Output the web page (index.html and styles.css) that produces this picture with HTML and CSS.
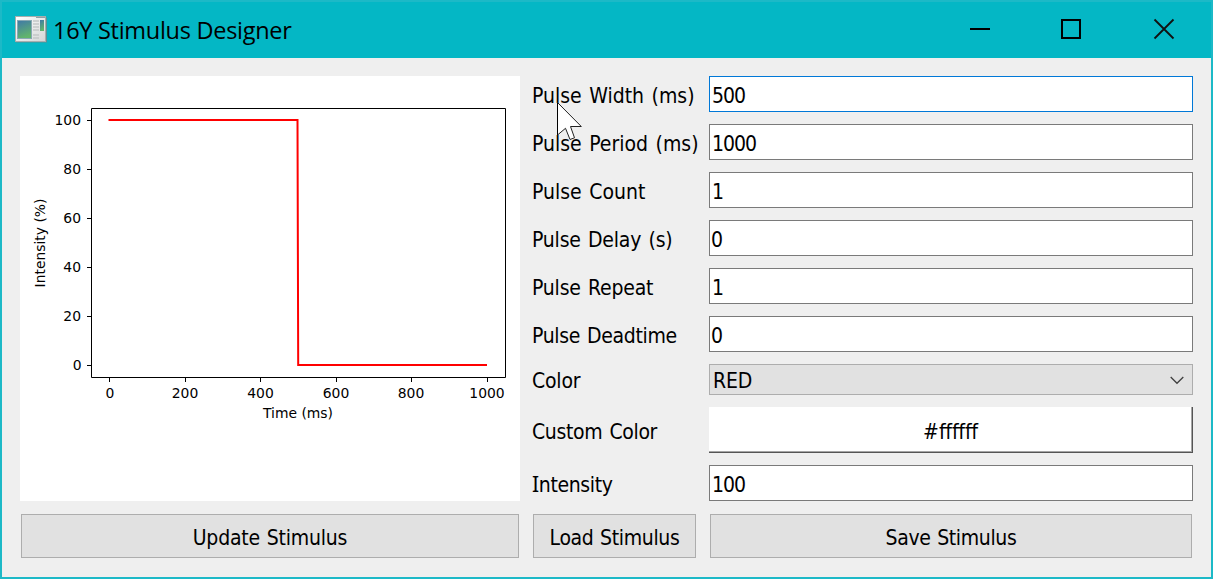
FILE: index.html
```html
<!DOCTYPE html>
<html lang="en">
<head>
<meta charset="utf-8">
<title>16Y Stimulus Designer</title>
<link rel="stylesheet" href="styles.css">
</head>
<body>
<div class="window">
  <header class="titlebar">
    <svg class="app-icon" width="32" height="27" viewBox="0 0 32 27">
      <defs>
        <linearGradient id="pane" x1="0" y1="0" x2="0.3" y2="1"><stop offset="0" stop-color="#3f78a8"/><stop offset="1" stop-color="#62b56c"/></linearGradient>
        <linearGradient id="frame" x1="0" y1="0" x2="1" y2="1"><stop offset="0" stop-color="#ffffff"/><stop offset="1" stop-color="#d4d6d6"/></linearGradient>
      </defs>
      <rect x="1" y="1.500" width="31" height="25" fill="#5d8f94"/>
      <rect x="0.500" y="0.500" width="30" height="25" fill="url(#frame)" stroke="#a9adad"/>
      <path d="M21 1.500h9" stroke="#8fa0a6"/>
      <rect x="2.500" y="4.500" width="14" height="18" fill="url(#pane)" stroke="#8aa9b4"/>
      <path d="M18 5h6M18 8h6M18 11h6M18 14h6M18 19h6M18 22h6" stroke="#c3c7c8" stroke-width="1.500"/>
      <rect x="25" y="4" width="4" height="11" fill="url(#pane)"/>
    </svg>
    <h1 class="title">16Y Stimulus Designer</h1>
    <svg class="controls" width="210" height="30" viewBox="0 0 210 30">
      <path d="M0 15h20" stroke="#000" stroke-width="2"/>
      <rect x="92" y="6" width="18" height="18" fill="none" stroke="#000" stroke-width="2"/>
      <path d="M184.500 5.500l19 19M203.500 5.500l-19 19" stroke="#111" stroke-width="1.800"/>
    </svg>
  </header>
  <main class="content">
    <section class="plot">
      <svg class="chart" width="500" height="425" viewBox="20 76 500 425">
        <path class="axis" d="M91.500 108.500H505.500V377.500H91.500Z"/>
        <path class="axis" d="M87 120.500h4M87 169.500h4M87 218.500h4M87 267.500h4M87 316.500h4M87 365.500h4"/>
        <path class="axis" d="M109.500 378v4M185.500 378v4M260.500 378v4M336.500 378v4M411.500 378v4M487.500 378v4"/>
        <path class="signal" d="M108.500 120H297.500L298.200 365H487"/>
        <g class="ticks-y">
          <text x="81" y="125.400">100</text><text x="81" y="174.400">80</text><text x="81" y="223.400">60</text>
          <text x="81" y="272">40</text><text x="81" y="321">20</text><text x="81.500" y="370">0</text>
        </g>
        <g class="ticks-x">
          <text x="110" y="398">0</text><text x="185" y="398">200</text><text x="260.500" y="398">400</text>
          <text x="336" y="398">600</text><text x="411" y="398">800</text><text x="487" y="398">1000</text>
          <text x="298" y="418">Time (ms)</text>
          <text transform="translate(45 243) rotate(-90)">Intensity (%)</text>
        </g>
      </svg>
    </section>
    <label class="label"><span>Pulse Width (ms)</span></label>
    <div class="field focused">500</div>
    <label class="label"><span>Pulse Period (ms)</span></label>
    <div class="field">1000</div>
    <label class="label"><span>Pulse Count</span></label>
    <div class="field">1</div>
    <label class="label"><span class="tight">Pulse Delay (s)</span></label>
    <div class="field zero">0</div>
    <label class="label"><span class="tight">Pulse Repeat</span></label>
    <div class="field">1</div>
    <label class="label"><span class="tighter">Pulse Deadtime</span></label>
    <div class="field zero">0</div>
    <label class="label label-color"><span class="tight">Color</span></label>
    <div class="combo"><span class="tight">RED</span>
      <svg width="14" height="9" viewBox="0 0 14 9"><path d="M0.700 1l6.300 6.300L13.300 1" fill="none" stroke="#404040" stroke-width="1.300"/></svg>
    </div>
    <label class="label"><span class="tighter">Custom Color</span></label>
    <div class="swatch"><span class="hex">#ffffff</span></div>
    <label class="label"><span class="tighter"><span class="serif-i">I</span>ntensity</span></label>
    <div class="field">100</div>
    <button class="button"><span class="tight">Update Stimulus</span></button>
    <button class="button"><span class="tighter">Load Stimulus</span></button>
    <button class="button"><span class="tighter">Save Stimulus</span></button>
  </main>
  <svg class="cursor" width="28" height="42" viewBox="0 0 28 42">
    <path d="M1.500 1.500V34L9.500 27.300L14 38.500L18.500 36.800L14.500 25.500H25.300Z" fill="#fff"/>
    <path d="M1.500 1.500V34" stroke="#000"/>
    <path d="M1.500 34L9.500 27.300L14 38.500L18.500 36.800L14.500 25.500H25.300L1.500 1.500" fill="none" stroke="#222"/>
  </svg>
</div>
</body>
</html>
```

FILE: styles.css
```css
* { box-sizing: border-box; }
body { margin: 0; }
.window {
  position: relative;
  width: 1213px;
  height: 579px;
  border: 2px solid #1cb9c7;
  background: #efefef;
  color: #000;
  font: 21px/26px "DejaVu Sans Condensed", "DejaVu Sans", sans-serif;
  font-stretch: condensed;
  overflow: hidden;
}
.titlebar {
  display: flex;
  align-items: center;
  height: 56px;
  padding: 0 31px 2px 13px;
  background: #04b7c5;
}
.title {
  margin: 1px auto 0 6px;
  font: 400 23.5px/32px "Open Sans", "Noto Sans", sans-serif;
  letter-spacing: -0.28px;
  white-space: nowrap;
}
.content {
  display: grid;
  grid-template-columns: 500px 165px 484px;
  grid-template-rows: repeat(6, 36px) 31px 46px 36px 46px;
  gap: 12px;
  padding: 18px;
}
.plot { grid-row: 1 / span 9; background: #fff; }
.chart { display: block; font: 13.9px "DejaVu Sans", sans-serif; font-stretch: normal; }
.axis { fill: none; stroke: #000; }
.signal { fill: none; stroke: #f00; stroke-width: 2; }
.ticks-y { text-anchor: end; }
.ticks-x { text-anchor: middle; }
.label {
  display: flex;
  align-items: center;
  padding-top: 4px;
  white-space: nowrap;
  word-spacing: 1.5px;
}
.label-color { padding-top: 2px; }
.tight { letter-spacing: -0.2px; }
.tighter { letter-spacing: -0.35px; }
.serif-i { font-family: "Noto Sans", sans-serif; font-stretch: normal; line-height: 1; }
.field {
  padding: 6px 2px 0;
  border: 1px solid #7a7a7a;
  background: #fff;
  letter-spacing: -1px;
}
.zero { padding-left: 1px; }
.focused { border-color: #0078d7; }
.combo {
  display: flex;
  align-items: center;
  justify-content: space-between;
  padding: 2px 8px 0 3px;
  border: 1px solid #adadad;
  background: #e1e1e1;
}
.swatch {
  display: flex;
  align-items: center;
  justify-content: center;
  padding-top: 5px;
  background: #fff;
  border-right: 1px solid #555;
  border-bottom: 1px solid #555;
  box-shadow: inset -1px -1px #a5a5a5;
}
.button {
  display: flex;
  align-items: center;
  justify-content: center;
  margin: 1px;
  padding: 3px 0 0;
  border: 1px solid #adadad;
  background: #e1e1e1;
  color: #000;
  font: inherit;
  white-space: nowrap;
  word-spacing: 1px;
}
.cursor { position: absolute; left: 554px; top: 99px; }
```
